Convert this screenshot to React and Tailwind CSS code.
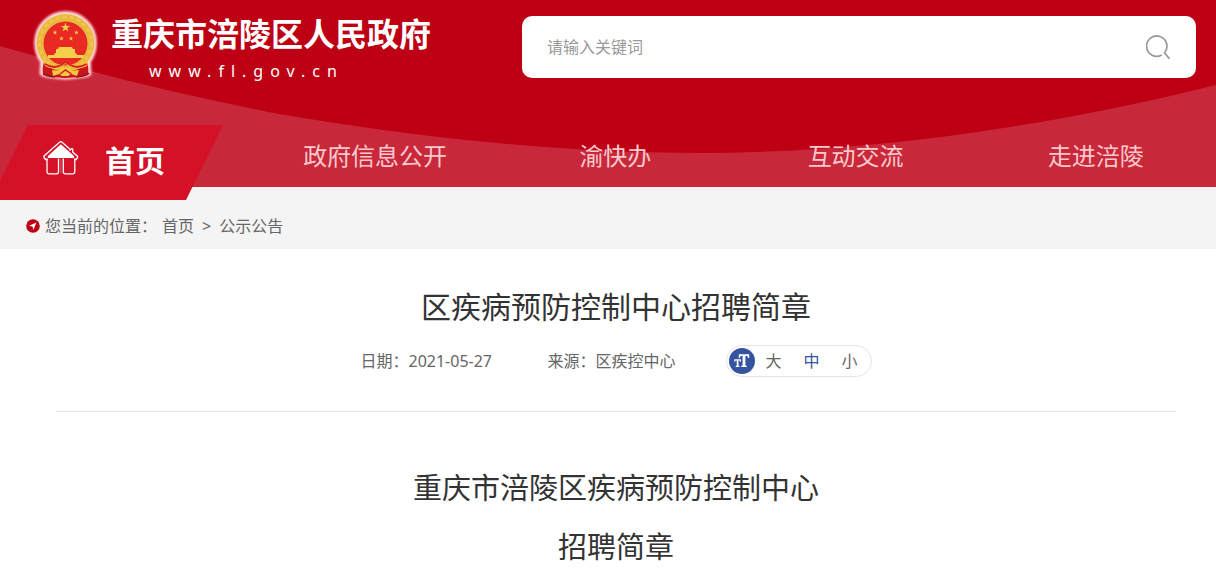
import React from 'react';

const NAV = ['政府信息公开', '渝快办', '互动交流', '走进涪陵'];

const STAR = 'M0-1 .225-.309.951-.309.363.118.588.809 0 .382-.588.809-.363.118-.951-.309-.225-.309Z';

function Emblem() {
  return (
    <svg viewBox="0 0 84 84" className="h-[84px] w-[84px] shrink-0" aria-hidden="true">
      <defs>
        <filter id="glow" x="-20%" y="-20%" width="140%" height="140%">
          <feGaussianBlur stdDeviation="1.3" />
        </filter>
      </defs>
      <path
        d="M41.500 8a30.500 30.500 0 0 1 30.500 30.500c0 8-2 14-6 19.500l.5 12c-3 3-10 3-13 3.500-8 1.500-16 1.500-24 0-3-.5-10-.5-13-3.500l.5-12c-4-5.500-6-11.500-6-19.500A30.500 30.500 0 0 1 41.500 8Z"
        fill="#ffe3e3"
        stroke="#ffc4c8"
        strokeWidth="2"
        filter="url(#glow)"
      />
      <path d="M20 57c-1 5-2 8-1 13l8 3 14 1 15-1 8-3c1-5 0-8-1-13Z" fill="#c9141c" />
      <circle cx="41.500" cy="39" r="29" fill="#e9b93f" />
      <circle cx="41.500" cy="39" r="26" fill="none" stroke="#f0c650" strokeWidth="2.500" strokeDasharray="4 3" />
      <circle cx="41.500" cy="39.500" r="22" fill="#e92a24" />
      <g fill="#f6cf4a">
        <path d={STAR} transform="translate(41.500 23.500) scale(5)" />
        <path d={STAR} transform="translate(31 28.500) scale(2.500)" />
        <path d={STAR} transform="translate(52.500 28.500) scale(2.500)" />
        <path d={STAR} transform="translate(37.500 34.500) scale(2.400)" />
        <path d={STAR} transform="translate(47 34.500) scale(2.400)" />
        <path d="M35 43h13l1 2h2v4H32v-4h2ZM31 49h21l1 2h7v3H24v-3h6Z" />
      </g>
      <path d="M19 54c6 7 14 9 22.500 3.500C50 63 58 61 65 54l-2 8c-5 3-10 3-15 1l-6.500-3-6.500 3c-4 2-9 2-14-1Z" fill="#f2bf3e" />
      <path d="M21 60c5 3 11 4 16 1l4.500-3 5 3c5 3 11 2 16-1" fill="none" stroke="#d8201e" strokeWidth="2" />
      <path d="M33 57.500h17" stroke="#e92a24" strokeWidth="1.500" />
      <path d="m28 66 7 1 3-3h7l3 3 7-1-2 6-6-2-3 2h-6l-3-2-6 2Z" fill="#f6c840" />
      <path d="m36 70 5.500-4 6 4" fill="none" stroke="#d21b1c" strokeWidth="1.500" />
      <path d="M19 70c4 3 8 2 12 3M65 69c-4 4-8 3-13 4" stroke="#8e1216" strokeWidth="1.500" fill="none" />
    </svg>
  );
}

function HomeIcon() {
  return (
    <svg viewBox="0 0 36 36" className="h-9 w-9 shrink-0" fill="none" stroke="#fff" strokeWidth="1.300" strokeLinecap="round" strokeLinejoin="round" aria-hidden="true">
      <path d="M4 19.500H2.500L1 17.500v-1.500L16.500 2.200q1.300-1 2.600 0l7.900 7v1l2-1.700.8.900-.1 2.600 4.800 4.300v1.500L33 19.500h-1.500" />
      <path d="M17.800 4.200 31 16q1 2-1 2H6q-2 0-1-2Z" fill="#fff" stroke="none" />
      <path d="M4 19v13q0 1.800 1.800 1.800h7.700q2 0 2-1.800V19M31.800 19v13q0 1.800-1.800 1.800h-7.700q-2 0-2-1.800V19" />
      <path d="M17.900 19v14" strokeWidth=".6" opacity=".5" />
    </svg>
  );
}

function SearchIcon() {
  return (
    <svg viewBox="0 0 24 24" className="h-6 w-6" fill="none" stroke="#999" strokeWidth="1.700" strokeLinecap="round" aria-hidden="true">
      <path d="M15.300 20.300A10.200 10.200 0 1 1 18.500 17.800L23 23.200" />
    </svg>
  );
}

export default function App() {
  return (
    <div className="min-h-screen bg-white font-['Noto_Sans','Noto_Sans_CJK_SC',sans-serif] text-base text-[#666]">
      <header className="relative bg-[#bd0014]">
        <svg viewBox="0 0 1216 187" preserveAspectRatio="none" className="absolute inset-0 h-full w-full" aria-hidden="true">
          <path d="M0 46C80 69 160 90 240 106Q275 114 300 117.500C440 140 570 153 700 153C860 153 1040 129 1216 85V187H0Z" fill="#c82839" />
        </svg>

        <div className="relative flex h-[125px] items-start pr-5">
          <a href="#home" className="flex w-[522px] shrink-0 items-start pl-6 pt-1 text-white">
            <Emblem />
            <span className="flex flex-col items-start pl-[3px] pt-[6px]">
              <span className="text-[32px] font-bold leading-[48px]">重庆市涪陵区人民政府</span>
              <span className="pl-[38px] text-base leading-[26px] tracking-[7px]">www.fl.gov.cn</span>
            </span>
          </a>
          <form className="mt-4 flex h-[62px] flex-1 items-center rounded-[10px] bg-white pl-[25px] pr-[26px]" onSubmit={(e) => e.preventDefault()}>
            <input
              type="text"
              aria-label="请输入关键词"
              placeholder="请输入关键词"
              className="h-full min-w-0 flex-1 bg-transparent text-base text-[#333] outline-none placeholder:text-[#999]"
            />
            <button type="submit" aria-label="搜索">
              <SearchIcon />
            </button>
          </form>
        </div>

        <nav className="relative grid h-[62px] grid-cols-[255px_repeat(4,1fr)] items-start text-2xl text-[#fbc9ce]">
          <a
            href="#home"
            className="flex h-[75px] w-[223px] items-start bg-[#d41126] pl-[43px] pt-[15px] text-3xl font-bold text-white [clip-path:polygon(28px_0,100%_0,186px_100%,0_100%,0_56px)]"
          >
            <HomeIcon />
            <span className="pl-[26px] leading-[42px]">首页</span>
          </a>
          {NAV.map((label) => (
            <a key={label} href="#section" className="text-center leading-[62px]">
              {label}
            </a>
          ))}
        </nav>
      </header>

      <nav aria-label="您当前的位置" className="flex h-[62px] items-center bg-[#f4f4f4] pl-[26px] pt-4">
        <svg viewBox="0 0 14 14" className="h-[14px] w-[14px]" aria-hidden="true">
          <circle cx="7" cy="7" r="6.800" fill="#bd0014" />
          <path d="M10.500 3.500 3 6.800l3.500.8.800 3.400Z" fill="#fff" />
        </svg>
        <span className="pl-[5px]">您当前的位置：</span>
        <a href="#home" className="pl-[5px]">首页</a>
        <span className="px-2">&gt;</span>
        <a href="#notices">公示公告</a>
      </nav>

      <main className="pb-[10px] pl-14 pr-10">
        <div className="border-b border-[#e2e2e2] pb-[34px] pt-9">
          <h1 className="text-center text-3xl leading-[44px] text-[#333]">区疾病预防控制中心招聘简章</h1>
          <div className="mt-4 flex items-center justify-center gap-[50px]">
            <span className="w-[137px]">日期：2021-05-27</span>
            <span>来源：区疾控中心</span>
            <div className="flex h-8 w-[146px] items-center rounded-full border border-[#e5e5e5] pl-[2px]">
              <svg viewBox="0 0 26 26" className="h-[26px] w-[26px]" aria-hidden="true">
                <circle cx="13" cy="13" r="13" fill="#3453a0" />
                <path
                  d="M9.800 6.300h10.400v3.600h-1.200l-.5-1.800h-2.100v9.500l1.500.5v1h-5.800v-1l1.500-.5V8.100h-2.100l-.5 1.800H9.800ZM5.300 11.200h6.600v2.600h-.9l-.3-1.400H9.500v5.300l1 .4v.8H6.700v-.8l1-.4v-5.300H6.500l-.3 1.400h-.9Z"
                  fill="#fff"
                />
              </svg>
              <div className="flex gap-[22px] pl-[11px]">
                <button type="button">大</button>
                <button type="button" className="text-[#3453a0]">中</button>
                <button type="button">小</button>
              </div>
            </div>
          </div>
        </div>

        <article className="pt-[46px] text-center text-[29px] leading-[59px] text-[#333]">
          <p>重庆市涪陵区疾病预防控制中心</p>
          <p>招聘简章</p>
        </article>
      </main>
    </div>
  );
}
